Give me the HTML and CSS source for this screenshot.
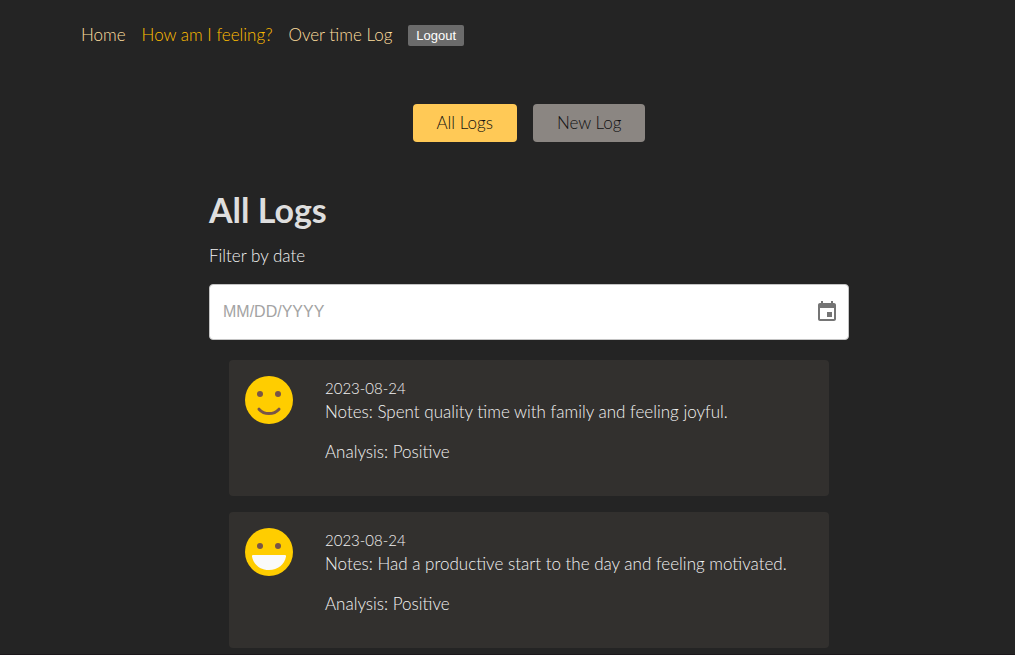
FILE: index.html
```html
<!DOCTYPE html>
<html lang="en">
<head>
<meta charset="utf-8">
<meta name="viewport" content="width=device-width, initial-scale=1">
<title>All Logs</title>
<link rel="stylesheet" href="styles.css">
</head>
<body>
<nav class="nav">
  <a class="nav-link" href="#home">Home</a>
  <a class="nav-link active" href="#feeling">How am I feeling?</a>
  <a class="nav-link" href="#log">Over time Log</a>
  <button class="logout" type="button">Logout</button>
</nav>
<main class="main">
  <div class="tabs">
    <button class="tab selected" type="button">All Logs</button>
    <button class="tab" type="button">New Log</button>
  </div>
  <section class="logs">
    <h1 class="title">All Logs</h1>
    <label class="filter-label" for="date">Filter by date</label>
    <div class="date-field">
      <input class="date-input" id="date" type="text" placeholder="MM/DD/YYYY">
      <button class="date-button" type="button" aria-label="Choose date">
        <svg class="date-icon" viewBox="0 0 24 24" aria-hidden="true"><path d="M17 12h-5v5h5v-5zM16 1v2H8V1H6v2H5c-1.11 0-1.99.9-1.99 2L3 19c0 1.1.89 2 2 2h14c1.1 0 2-.9 2-2V5c0-1.1-.9-2-2-2h-1V1h-2zm3 18H5V8h14v11z"/></svg>
      </button>
    </div>
    <ul class="cards">
      <li class="card">
        <svg class="face" viewBox="0 0 48 48" aria-hidden="true">
          <circle class="head" cx="24" cy="24" r="24"/>
          <circle class="eye" cx="15" cy="18" r="3"/>
          <circle class="eye" cx="33" cy="18" r="3"/>
          <path class="smile" d="M14 33.200Q18 37.600 24 37.600T34 33.200"/>
        </svg>
        <div class="entry">
          <p class="line date">2023-08-24</p>
          <p class="line">Notes: Spent quality time with family and feeling joyful.</p>
          <p class="analysis">Analysis: Positive</p>
        </div>
      </li>
      <li class="card">
        <svg class="face" viewBox="0 0 48 48" aria-hidden="true">
          <circle class="head" cx="24" cy="24" r="24"/>
          <circle class="eye" cx="15" cy="18" r="3"/>
          <circle class="eye" cx="33" cy="18" r="3"/>
          <path class="teeth" d="M8 27H40Q41.200 27 41 28.500C39.500 36.500 33 42 24 42S8.500 36.500 7 28.500Q6.800 27 8 27Z"/>
        </svg>
        <div class="entry">
          <p class="line date">2023-08-24</p>
          <p class="line">Notes: Had a productive start to the day and feeling motivated.</p>
          <p class="analysis">Analysis: Positive</p>
        </div>
      </li>
    </ul>
  </section>
</main>
</body>
</html>
```
FILE: styles.css
```css
* { box-sizing: border-box; }
body {
  margin: 0;
  min-height: 100vh;
  background: #242424;
  border-bottom: 1px solid #1b171a;
  color: #f2f2f2;
  font: 300 17px/24px Lato, "Open Sans", sans-serif;
}
.nav {
  display: flex;
  align-items: center;
  gap: 16px;
  padding: 23px 81px 0;
}
.nav-link { color: #ffdf9f; text-decoration: none; }
.nav-link.active { color: #ffbe00; }
.logout {
  height: 21px;
  padding: 0 8px;
  border: 0;
  border-radius: 2px;
  background: #6b6b6b;
  color: #fff;
  font: 13px/21px "Liberation Sans", Arial, sans-serif;
}
.main { padding: 57px 0 6px 43px; }
.tabs { display: flex; justify-content: center; gap: 16px; }
.tab {
  height: 38px;
  padding: 0 24px;
  border: 0;
  border-radius: 4px;
  background: #8b8682;
  color: #111;
  font: inherit;
}
.tab.selected { background: #ffc956; }
.logs { max-width: 640px; margin: 48px auto 0; }
.title { margin: 0; color: #dedede; font-size: 34px; line-height: 40px; font-weight: 700; }
.filter-label { display: block; margin: 14px 0 16px; }
.date-field {
  display: flex;
  align-items: center;
  height: 56px;
  padding: 0 9px 0 13px;
  border: 1px solid #c4c4c4;
  border-radius: 4px;
  background: #fff;
}
.date-input {
  flex: 1;
  min-width: 0;
  padding: 0;
  border: 0;
  outline: 0;
  background: transparent;
  color: #242424;
  font: 16px/24px "Liberation Sans", Arial, sans-serif;
}
.date-input::placeholder { color: #a3a3a3; opacity: 1; }
.date-button { display: flex; padding: 0; border: 0; background: transparent; }
.date-icon { width: 24px; height: 24px; fill: #757575; }
.cards {
  display: grid;
  gap: 16px;
  margin: 20px 20px 0;
  padding: 0;
  list-style: none;
}
.card {
  display: flex;
  gap: 32px;
  padding: 16px 16px 32px;
  border-radius: 4px;
  background: #32302e;
}
.face { flex: none; width: 48px; height: 48px; }
.head { fill: #ffcd00; }
.eye { fill: #795548; }
.smile { fill: none; stroke: #795548; stroke-width: 3; stroke-linecap: round; }
.teeth { fill: #fafafa; }
.line { margin: 0; }
.date { font-size: 15px; }
.analysis { margin: 16px 0 0; }
```
